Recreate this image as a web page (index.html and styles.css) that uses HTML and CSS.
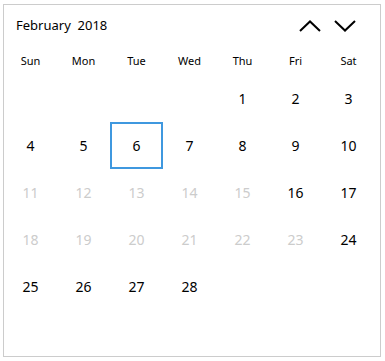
FILE: index.html
```html
<!DOCTYPE html>
<html lang="en">
<head>
  <meta charset="UTF-8" />
  <title>Calendar</title>
  <link rel="stylesheet" href="styles.css">
</head>
<body>
  <div class="calendar">
    <div class="cal-header">
      <span class="cal-title">February&nbsp; 2018</span>
      <div class="cal-nav">
        <button class="nav-btn" aria-label="Previous">
          <svg width="22" height="12" viewBox="0 0 22 12"><polyline points="1,11 11,1.5 21,11" fill="none" stroke="#000" stroke-width="2"/></svg>
        </button>
        <button class="nav-btn" aria-label="Next">
          <svg width="22" height="12" viewBox="0 0 22 12"><polyline points="1,1 11,10.5 21,1" fill="none" stroke="#000" stroke-width="2"/></svg>
        </button>
      </div>
    </div>
    <div class="weekdays">
      <span>Sun</span><span>Mon</span><span>Tue</span><span>Wed</span><span>Thu</span><span>Fri</span><span>Sat</span>
    </div>
    <div class="days">
      <span></span><span></span><span></span><span></span>
      <span>1</span><span>2</span><span>3</span>
      <span>4</span><span>5</span><span class="selected">6</span><span>7</span><span>8</span><span>9</span><span>10</span>
      <span class="off">11</span><span class="off">12</span><span class="off">13</span><span class="off">14</span><span class="off">15</span><span>16</span><span>17</span>
      <span class="off">18</span><span class="off">19</span><span class="off">20</span><span class="off">21</span><span class="off">22</span><span class="off">23</span><span>24</span>
      <span>25</span><span>26</span><span>27</span><span>28</span>
    </div>
  </div>
</body>
</html>
```

FILE: styles.css
```css
body { margin: 0; background: #fff; font-family: "Noto Sans", "Open Sans", sans-serif; color: #000; }
.calendar { margin: 4px 0 0 3px; width: 376px; height: 351px; border: 1px solid #cccccc; }
.cal-header { height: 40px; display: flex; align-items: center; justify-content: space-between; padding: 0 24px 0 12px; }
.cal-title { font-size: 13px; }
.cal-nav { display: flex; gap: 13px; padding-top: 2px; }
.nav-btn { border: 0; background: none; padding: 0; width: 22px; height: 12px; display: flex; }
.weekdays { display: grid; grid-template-columns: repeat(7, 53px); height: 30px; align-items: center; font-size: 11px; }
.weekdays span { text-align: center; }
.days { display: grid; grid-template-columns: repeat(7, 53px); grid-auto-rows: 47px; font-size: 14px; }
.days span { display: flex; align-items: center; justify-content: center; }
.days .off { color: #cccccc; }
.days .selected { border: 2px solid #3f98df; }
```
